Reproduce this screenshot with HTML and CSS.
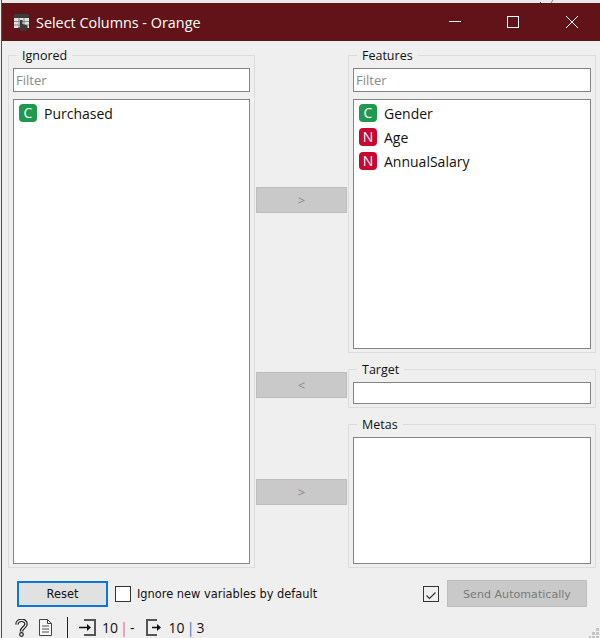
FILE: index.html
```html
<!DOCTYPE html>
<html lang="en">
<head>
  <meta charset="UTF-8">
  <title>Select Columns - Orange</title>
  <link rel="stylesheet" href="styles.css">
</head>
<body>
  <div class="window">
    <div class="topstrip">
      <svg width="16" height="3" viewBox="0 0 16 3"><path d="M1 3l1-1" stroke="#333"/><path d="M12 3l2-3" stroke="#888"/></svg>
    </div>
    <div class="titlebar">
      <svg class="app-icon" width="16" height="18" viewBox="0 0 16 18">
        <rect x="0" y="1" width="15" height="5" rx="1" fill="#3c3c3c"/>
        <rect x="0" y="5" width="15" height="10" fill="#e4e0e0"/>
        <path d="M5 5v10M10 5v10M0 8.500h15M0 12h15" stroke="#8a8484"/>
        <path d="M6 7h2.500v4l5 1.500v3l-1.500 2.500h-5l-3-4 2 .5z" fill="#3a3a3a"/>
      </svg>
      <span class="title">Select Columns - Orange</span>
      <div class="win-buttons">
        <svg width="12" height="12" viewBox="0 0 12 12"><path d="M0 5.500h12" stroke="#fff"/></svg>
        <svg width="12" height="12" viewBox="0 0 12 12"><rect x=".5" y=".5" width="11" height="11" fill="none" stroke="#fff"/></svg>
        <svg class="close" width="12" height="12" viewBox="0 0 12 12"><path d="M0 0l12 12M12 0L0 12" stroke="#fff"/></svg>
      </div>
    </div>

    <div class="content">
      <section class="box ignored">
        <h3 class="legend">Ignored</h3>
        <input class="filter" type="text" placeholder="Filter">
        <ul class="list fill">
          <li><span class="tag cat">C</span>Purchased</li>
        </ul>
      </section>

      <div class="middle">
        <button class="move move-features" disabled>&gt;</button>
        <button class="move move-target" disabled>&lt;</button>
        <button class="move move-metas" disabled>&gt;</button>
      </div>

      <div class="right">
        <section class="box features">
          <h3 class="legend">Features</h3>
          <input class="filter" type="text" placeholder="Filter">
          <ul class="list fill">
            <li><span class="tag cat">C</span>Gender</li>
            <li><span class="tag num">N</span>Age</li>
            <li><span class="tag num">N</span>AnnualSalary</li>
          </ul>
        </section>
        <section class="box target">
          <h3 class="legend">Target</h3>
          <div class="list fill"></div>
        </section>
        <section class="box metas">
          <h3 class="legend">Metas</h3>
          <div class="list fill"></div>
        </section>
      </div>
    </div>

    <div class="actions">
      <button class="reset">Reset</button>
      <span class="check"></span>
      <span class="check-label">Ignore new variables by default</span>
      <span class="check checked">
        <svg width="14" height="14" viewBox="0 0 14 14"><path d="M2.500 7.500l3 3 6-6" fill="none" stroke="#333" stroke-width="1.200"/></svg>
      </span>
      <button class="send" disabled>Send Automatically</button>
    </div>

    <div class="statusbar">
      <svg width="13" height="18" viewBox="0 0 13 18">
        <path d="M2 5.500C2 0 11 0 11 5c0 3.500-4.500 3.500-4.500 7.500" fill="none" stroke="#222" stroke-width="3.600"/>
        <path d="M2 5.500C2 0 11 0 11 5c0 3.500-4.500 3.500-4.500 7.500" fill="none" stroke="#efefef" stroke-width="1.200"/>
        <circle cx="6.500" cy="15.500" r="1.800" fill="#efefef" stroke="#222" stroke-width="1.200"/>
      </svg>
      <svg class="doc" width="13" height="17" viewBox="0 0 13 17"><path d="M.5.500h8l4 4v12H.5zM8.500.500v4h4" fill="#f6f6f6" stroke="#444"/><path d="M3 7h7M3 10h7M3 13h7" stroke="#555"/></svg>
      <span class="divider"></span>
      <svg width="17" height="17" viewBox="0 0 17 17"><path d="M5 1h11v15H5" fill="none" stroke="#555" stroke-width="2"/><path d="M0 8.500h9" stroke="#111" stroke-width="1.500"/><path d="M8 5l4 3.500L8 12z" fill="#111"/></svg>
      <span class="count count-in">10 <i>|</i> -</span>
      <svg width="16" height="17" viewBox="0 0 16 17"><path d="M11 1H1v15h10" fill="none" stroke="#555" stroke-width="2"/><path d="M6 8.500h6" stroke="#111" stroke-width="1.500"/><path d="M11 5l4 3.500L11 12z" fill="#111"/></svg>
      <span class="count">10 <i class="blue">|</i> 3</span>
    </div>

    <svg class="grip" width="11" height="10" viewBox="0 0 11 10">
      <path d="M7 0h3v3H7zM3 4h3v3H3zM7 4h3v3H7zM0 8h2v2H0zM3 8h3v2H3zM7 8h3v2H7z" fill="#c4c4c4"/>
    </svg>
  </div>
</body>
</html>
```

FILE: styles.css
```css
html, body {
  margin: 0;
  padding: 0;
}
body {
  width: 600px;
  height: 638px;
  overflow: hidden;
  background: #efefef;
  font-family: "Open Sans", "Noto Sans", sans-serif;
  font-size: 14px;
  color: #111;
}
.window {
  position: relative;
  display: flex;
  flex-direction: column;
  height: 638px;
  margin-left: 1px;
  box-sizing: border-box;
  border-left: 1px solid #7c3a3a;
}
.topstrip {
  display: flex;
  justify-content: flex-end;
  height: 3px;
  flex: none;
  padding-right: 45px;
  background: #e9e9e9;
}
.titlebar {
  display: flex;
  align-items: center;
  height: 38px;
  flex: none;
  background: #621317;
  color: #fff;
  padding-left: 12px;
}
.title {
  margin-left: 6px;
  font-size: 14.4px;
}
.win-buttons {
  display: flex;
  gap: 46px;
  margin-left: auto;
  margin-right: 22px;
}
.close { margin-left: 1px; }
.content {
  display: flex;
  flex: none;
  padding: 14px 4px 0 6px;
}
.box {
  position: relative;
  display: flex;
  flex-direction: column;
  box-sizing: border-box;
  padding: 12px 4px 3px;
  border: 1px solid #dcdcdc;
}
.legend {
  position: absolute;
  top: -8px;
  left: 8px;
  margin: 0;
  padding: 0 5px;
  background: #efefef;
  font-size: 12.5px;
  font-weight: normal;
  line-height: 15px;
}
.ignored {
  width: 247px;
  height: 513px;
  flex: none;
}
.filter {
  display: block;
  height: 24px;
  flex: none;
  width: 100%;
  box-sizing: border-box;
  border: 1px solid #858585;
  padding: 0 2px;
  margin: 0 0 7px;
  font: 13px "Open Sans", sans-serif;
  background: #fff;
  outline: none;
}
.filter::placeholder {
  color: #8a8a8a;
}
.list {
  list-style: none;
  margin: 0;
  padding: 1px 0 0;
  background: #fff;
  border: 1px solid #858585;
  box-sizing: border-box;
}
.fill {
  flex: 1;
  min-height: 0;
}
.list li {
  display: flex;
  align-items: center;
  height: 24px;
  padding-left: 5px;
}
.tag {
  width: 18px;
  height: 18px;
  margin-right: 7px;
  border-radius: 4px;
  color: #fff;
  font-size: 14px;
  line-height: 18px;
  text-align: center;
  flex: none;
}
.cat { background: #1f9a4d; }
.num { background: #c9082f; }
.middle {
  width: 91px;
  flex: none;
  margin: 0 1px;
  display: flex;
  flex-direction: column;
  padding-top: 132px;
  box-sizing: border-box;
}
.move {
  width: 91px;
  height: 26px;
  flex: none;
  padding: 0;
  border: 1px solid #bdbdbd;
  background: #c9c9c9;
  color: #8a8a8a;
  font: 13px "Open Sans", sans-serif;
}
.move-target { margin-top: 159px; }
.move-metas { margin-top: 81px; }
.right {
  width: 248px;
  flex: none;
  display: flex;
  flex-direction: column;
  gap: 16px;
}
.features { height: 298px; }
.target { height: 39px; }
.metas { height: 144px; }
.actions {
  display: flex;
  align-items: center;
  height: 27px;
  flex: none;
  margin-top: 12px;
  padding: 0 13px 0 15px;
}
.reset {
  width: 91px;
  height: 26px;
  padding: 0;
  border: 2px solid #0a78d7;
  background: #e1e1e1;
  color: #111;
  font: 11.400px "DejaVu Sans", sans-serif;
  margin-right: 7px;
}
.check {
  width: 16px;
  height: 16px;
  box-sizing: border-box;
  border: 1px solid #333;
  background: #fff;
  margin-right: 6px;
  flex: none;
}
.check-label {
  font: 11.400px "DejaVu Sans", sans-serif;
}
.checked {
  margin-left: auto;
  margin-right: 8px;
  background: transparent;
}
.send {
  width: 140px;
  height: 27px;
  padding: 1px 0 0;
  border: 1px solid #bdbdbd;
  background: #c9c9c9;
  color: #7a7a7a;
  font: 11.100px "DejaVu Sans", sans-serif;
}
.statusbar {
  display: flex;
  align-items: center;
  height: 21px;
  flex: none;
  padding: 10px 0 0 13px;
}
.doc { margin-left: 11px; }
.divider {
  width: 1px;
  height: 21px;
  background: #222;
  margin: 0 11px 0 15px;
}
.count {
  margin-left: 6px;
  word-spacing: -1.500px;
}
.count-in { margin-right: 11px; }
.count + svg + .count { margin-left: 7px; }
.count i {
  font-style: normal;
  color: #d9741a;
}
.count i.blue { color: #1f78c4; }
.grip {
  position: absolute;
  right: 0;
  bottom: 0;
}
```
